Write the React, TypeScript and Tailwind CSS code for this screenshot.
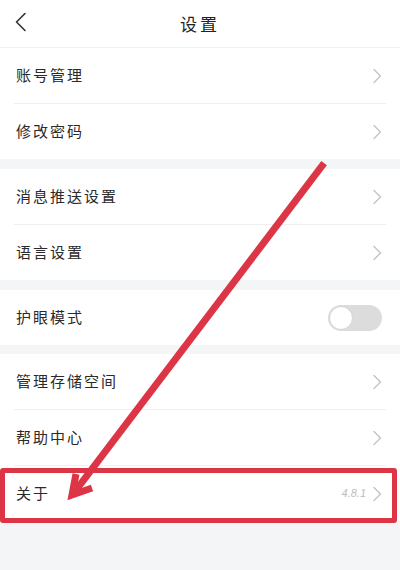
import React from "react";

const Chevron = () => (
  <svg width="10" height="16" viewBox="0 0 10 16" fill="none">
    <path d="M2 1.5 L8.5 8 L2 14.5" stroke="#c6c6c6" strokeWidth="1.5" strokeLinecap="round" strokeLinejoin="round" />
  </svg>
);

const Row = ({ label, extra, divider, right }: { label: string; extra?: string; divider?: boolean; right?: React.ReactNode }) => (
  <div className="bg-white">
    <div className="h-[55px] flex items-center justify-between pl-4 pr-[18px]">
      <span className="text-[15px] tracking-[2px] text-[#2a2a2a]">{label}</span>
      <div className="flex items-center gap-[6px]">
        {extra && <span className="text-[11px] italic text-[#bdbdbd] font-['Liberation_Sans',sans-serif]">{extra}</span>}
        {right ?? <Chevron />}
      </div>
    </div>
    {divider && <div className="mx-[14px] h-px bg-[#efefef]" />}
  </div>
);

export default function App() {
  return (
    <div className="relative w-[400px] h-[570px] bg-[#f4f5f7] overflow-hidden font-['Noto_Sans_CJK_SC','Noto_Sans',sans-serif]">
      <div className="h-[48px] bg-white flex items-center justify-center relative border-b border-[#f2f2f2]">
        <div className="absolute left-[14px] top-[12px]">
          <svg width="14" height="20" viewBox="0 0 14 20" fill="none">
            <path d="M11 1.5 L2.5 10 L11 18.5" stroke="#333" strokeWidth="1.6" strokeLinecap="round" strokeLinejoin="round" />
          </svg>
        </div>
        <span className="text-[17px] tracking-[3px] text-[#222]">设置</span>
      </div>
      <Row label="账号管理" divider />
      <Row label="修改密码" />
      <div className="h-[10px]" />
      <Row label="消息推送设置" divider />
      <Row label="语言设置" />
      <div className="h-[10px]" />
      <Row
        label="护眼模式"
        right={
          <div className="w-[54px] h-[26px] rounded-full bg-[#dcdcdc] p-px flex items-center">
            <div className="w-[24px] h-[24px] rounded-full bg-white border border-[#d4d4d4]" />
          </div>
        }
      />
      <div className="h-[9px]" />
      <Row label="管理存储空间" divider />
      <Row label="帮助中心" divider />
      <Row label="关于" extra="4.8.1" />

      <div className="absolute left-0 top-[468px] w-[397px] h-[55px] border-[5px] border-[#dc3545] rounded-[3px] pointer-events-none" />
      <svg className="absolute left-0 top-0 pointer-events-none" width="400" height="570" viewBox="0 0 400 570">
        <g stroke="#dc3545" strokeWidth="7" fill="none">
          <line x1="322" y1="166" x2="76" y2="490" strokeLinecap="square" />
          <polyline points="76,474 72,495 92,488" strokeLinejoin="miter" strokeLinecap="butt" />
        </g>
      </svg>
    </div>
  );
}
